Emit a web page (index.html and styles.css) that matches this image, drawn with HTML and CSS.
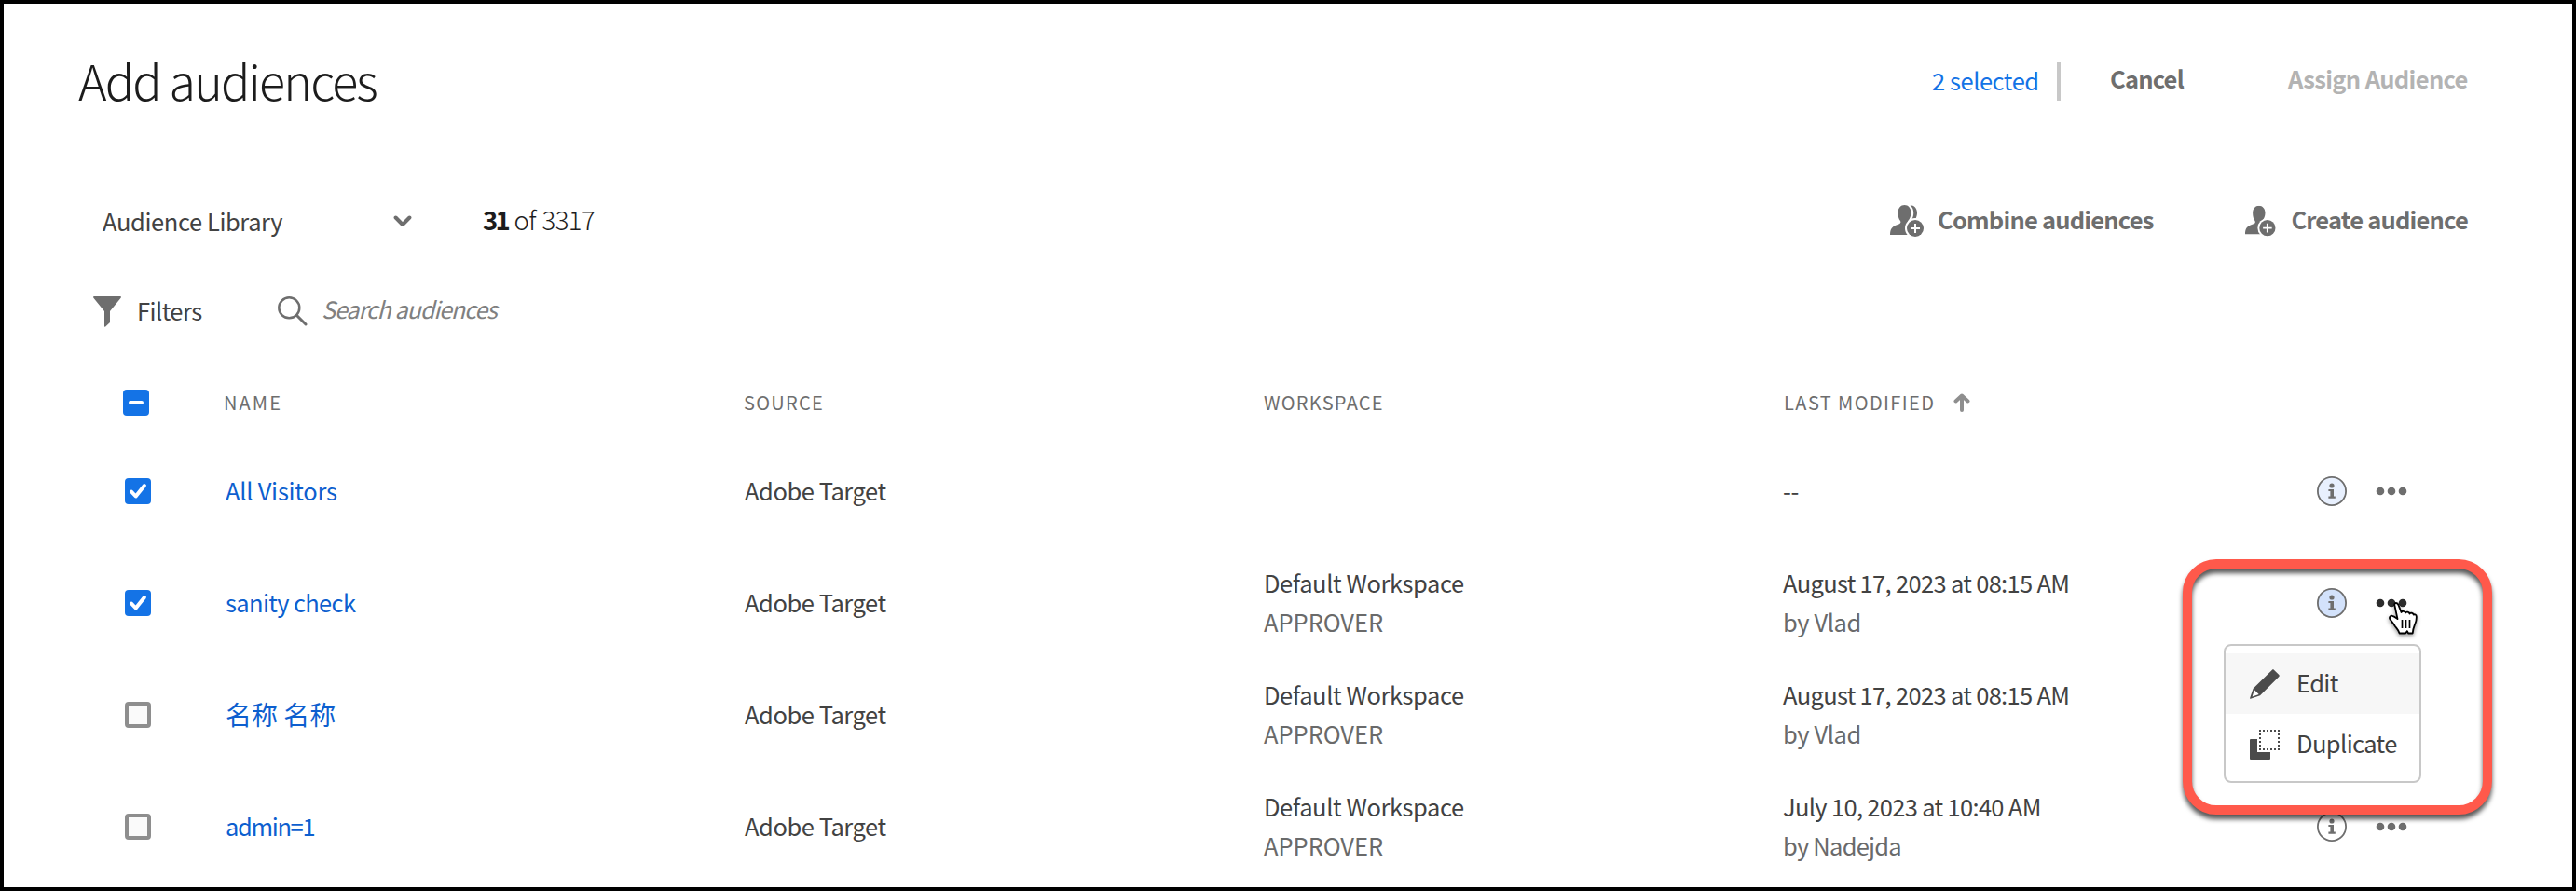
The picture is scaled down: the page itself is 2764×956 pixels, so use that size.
FILE: index.html
```html
<!DOCTYPE html>
<html lang="en">
<head>
<meta charset="utf-8">
<title>Add audiences</title>
<link rel="stylesheet" href="styles.css">
</head>
<body>
<svg class="defs" width="0" height="0">
  <symbol id="info" viewBox="0 0 32 32"><circle cx="16" cy="16" r="15.100" stroke="#6e6e6e" stroke-width="1.800"/><circle cx="16" cy="10" r="2.600" fill="#6e6e6e"/><path d="M12.400 14h5.600v7.600h1.800v2.200h-7.400v-2.200h2V16h-2z" fill="#6e6e6e"/></symbol>
  <symbol id="more" viewBox="0 0 34 10"><circle cx="5" cy="5" r="4.300"/><circle cx="17" cy="5" r="4.300"/><circle cx="29" cy="5" r="4.300"/></symbol>
  <symbol id="check" viewBox="0 0 28 28"><path d="M7 14.500l4.700 5L20.900 8" fill="none" stroke="#fff" stroke-width="4" stroke-linecap="round" stroke-linejoin="round"/></symbol>
  <symbol id="person" viewBox="0 0 36 34"><path d="M15.500 0c4 0 7 3.200 7 8.200 0 4-1.500 6.500-3 8.500-.8 1-.6 2.600.4 3.200l3.100 1.600V32H0c0-6 2-8.500 6-10.200l4-1.600c1.600-.7 1.700-2.300.8-3.500-1.500-2-2.300-4.500-2.300-8.500 0-5 3-8.200 7-8.200z"/></symbol>
</svg>
<main class="dialog">
  <header class="titlebar">
    <h1 class="title">Add audiences</h1>
    <span class="selected">2 selected</span>
    <span class="rule"></span>
    <button class="btn cancel">Cancel</button>
    <button class="btn assign">Assign Audience</button>
  </header>
  <section class="library">
    <div class="picker"><span>Audience Library</span>
      <svg width="20" height="14" viewBox="0 0 20 14"><path d="M2.600 3.500L10 11l7.400-7.500" fill="none" stroke="#6e6e6e" stroke-width="4" stroke-linecap="round" stroke-linejoin="round"/></svg>
    </div>
    <div class="count"><b>31</b> of 3317</div>
    <button class="btn combine">
      <svg width="36" height="34" viewBox="0 0 36 34" fill="#6e6e6e"><path d="M21.500.2C26 .2 29 3.500 29 8.500c0 2.200-.6 4-1.400 6L23.500 15c1.200-2 1.700-4 1.700-6.500 0-3.500-1.200-6.200-3.700-8.300z"/><use href="#person"/><circle cx="27" cy="25" r="11" fill="#fff"/><circle cx="27" cy="25" r="9"/><path d="M27 20v10M22 25h10" stroke="#fff" stroke-width="2"/></svg>
      <span>Combine audiences</span></button>
    <button class="btn create">
      <svg width="36" height="34" viewBox="0 0 36 34" fill="#6e6e6e"><use href="#person"/><circle cx="25" cy="25" r="11" fill="#fff"/><circle cx="25" cy="25" r="9"/><path d="M25 20v10M20 25h10" stroke="#fff" stroke-width="2"/></svg>
      <span>Create audience</span></button>
  </section>
  <section class="filters">
    <svg width="30" height="33" viewBox="0 0 30 33"><path d="M1 0h28c1 0 1.200.9.600 1.700L18 16v12l-4.800 4.500c-.7.500-1.200.2-1.200-.5V16L.4 1.700C-.2.900 0 0 1 0z" fill="#6e6e6e"/></svg>
    <span class="filter-label">Filters</span>
    <svg width="32" height="32" viewBox="0 0 32 32"><circle cx="12.300" cy="12.300" r="11" fill="none" stroke="#6e6e6e" stroke-width="2.500"/><path d="M20.500 20.500l9.500 9.500" stroke="#6e6e6e" stroke-width="3" stroke-linecap="round"/></svg>
    <span class="search">Search audiences</span>
  </section>
  <section class="table">
    <div class="row head">
      <span class="box on"><svg viewBox="0 0 28 28"><path d="M8 14h12" stroke="#fff" stroke-width="4" stroke-linecap="round"/></svg></span>
      <span class="label wide">NAME</span><span class="label">SOURCE</span><span class="label">WORKSPACE</span>
      <span class="sort"><span class="label modified">LAST MODIFIED</span><svg width="18" height="20" viewBox="0 0 18 20"><path d="M9 2.500V18M2.500 8.500L9 2.500l6.500 6" fill="none" stroke="#8e8e8e" stroke-width="4" stroke-linecap="round" stroke-linejoin="round"/></svg></span>
      <span></span>
    </div>
    <div class="row">
      <span class="box on"><svg><use href="#check"/></svg></span>
      <a class="name visitors">All Visitors</a><span class="cell">Adobe Target</span><span></span><span class="cell">--</span>
      <span class="actions"><svg class="info tint1"><use href="#info"/></svg><svg class="more"><use href="#more"/></svg></span>
    </div>
    <div class="row">
      <span class="box on"><svg><use href="#check"/></svg></span>
      <a class="name">sanity check</a><span class="cell">Adobe Target</span>
      <span class="stack"><span>Default Workspace</span><small class="role">APPROVER</small></span>
      <span class="stack"><span class="date">August 17, 2023 at 08:15 AM</span><small>by Vlad</small></span>
      <span class="actions"><svg class="info tint2"><use href="#info"/></svg><svg class="more active"><use href="#more"/></svg></span>
    </div>
    <div class="row">
      <span class="box"></span>
      <a class="name cjk">名称 名称</a><span class="cell">Adobe Target</span>
      <span class="stack"><span>Default Workspace</span><small class="role">APPROVER</small></span>
      <span class="stack"><span class="date">August 17, 2023 at 08:15 AM</span><small>by Vlad</small></span>
      <span class="actions"></span>
    </div>
    <div class="row">
      <span class="box"></span>
      <a class="name admin">admin=1</a><span class="cell">Adobe Target</span>
      <span class="stack"><span>Default Workspace</span><small class="role">APPROVER</small></span>
      <span class="stack"><span class="date">July 10, 2023 at 10:40 AM</span><small class="long">by Nadejda</small></span>
      <span class="actions"><svg class="info"><use href="#info"/></svg><svg class="more"><use href="#more"/></svg></span>
    </div>
  </section>
</main>
<div class="menu">
  <div class="item hover"><svg width="32" height="32" viewBox="0 0 32 32"><path d="M24 .7c.6-.6 1.300-.6 1.900 0l5.400 5.400c.6.600.6 1.200 0 1.800L11 28.300.8 31.700c-.6.200-.9-.1-.7-.7L3.600 20.800z" fill="#4b4b4b"/><path d="M4.900 22.300l4.800 4.800-7.100 2.400z" fill="#fff"/></svg><span>Edit</span></div>
  <div class="item"><svg width="32" height="32" viewBox="0 0 32 32"><path d="M1 10h7v14h14v7a1 1 0 0 1-1 1H1a1 1 0 0 1-1-1V11a1 1 0 0 1 1-1z" fill="#4b4b4b"/><path d="M10 1h22M10 21h22M11 4v16M31 4v16" stroke="#4b4b4b" stroke-width="2" stroke-dasharray="2 2"/></svg><span>Duplicate</span></div>
</div>
<div class="callout"></div>
<svg class="pointer" width="32" height="36" viewBox="0 0 32 36"><path d="M7.500 4c-.7-2.200.3-3 1.500-3s2 .7 2.600 2.400L14.500 11c.3-1.800 4-1.600 4.500.6.700-1.600 4-1.200 4.500.9.900-1.400 3.800-1 4.400 1.200.8-.9 2.800-.2 2.900 1.800.2 3.200-.2 5-1.500 8-1.200 3-2.100 4.500-2.600 10h-4.600l-1.200-2.400-1.800 2.400h-6.500c-.6-3-2.800-5-5-8-1.600-2.800-3-4.300-5-6.800-1.500-2 0-4.700 2.500-3.900 1.600.4 3.400 1.700 5.400 3.300z" fill="#fff" stroke="#000" stroke-width="1.800" stroke-linejoin="round"/><path d="M15.500 19v9M19.500 19v9M23.500 19v9" stroke="#000" stroke-width="1.700"/></svg>
</body>
</html>
```
FILE: styles.css
```css
*{box-sizing:border-box}
body{margin:0;font-family:"Noto Sans CJK SC",sans-serif;font-size:25.5px;color:#424242;background:#fff;line-height:1;white-space:nowrap}
.defs{position:absolute}
.dialog{height:956px;border:4px solid #000;display:flex;flex-direction:column;overflow:hidden}
.titlebar,.library,.filters{display:flex;align-items:center}
.titlebar{height:160px;padding:0 112px 0 80px}
.title{margin:0 auto 0 0;padding-top:3px;font-weight:300;font-size:52px;letter-spacing:-1.850px;color:#1c1c1c}
.selected{width:134px;padding-top:4px;color:#1473e6;letter-spacing:-.45px}
.rule{width:4px;height:42px;background:#c8c8c8;margin:6px 53px 0 0}
.btn{border:0;background:none;padding:0;font:700 25.5px/1 "Noto Sans CJK SC",sans-serif;letter-spacing:-.8px;color:#6e6e6e;display:flex;align-items:center}
.cancel{width:191px}
.assign{width:193px;color:#b3b3b3;letter-spacing:-.65px}
.library{height:146px;padding:0 112px 0 106px}
.picker{display:flex;align-items:center;justify-content:space-between;width:332px;letter-spacing:-.4px}
.count{margin:0 auto 0 76px;padding-bottom:2px;font-size:27.5px;font-weight:300;letter-spacing:-.6px;word-spacing:1.200px;color:#1c1c1c}
.count b{font-weight:700;letter-spacing:-2.800px}
.combine{width:381px}
.create{width:239px}
.btn svg{margin-right:15px}
.btn span{padding-bottom:4px}
.filters{height:48px;padding-left:96px}
.filter-label{width:151px;margin-left:17px;padding-bottom:3px;letter-spacing:-.55px}
.search{margin-left:15px;padding-bottom:6px;font-size:25px;font-style:italic;letter-spacing:-1px;color:#808080}
.table{margin-top:39px}
.row{display:grid;grid-template-columns:108px 557px 557px 557px 573px 1fr;align-items:center;height:120px;padding-left:130px}
.head{grid-template-columns:108px 558px 558px 558px 571px 1fr;height:70px;padding-left:128px;font-size:20px;color:#6e6e6e}
.label{padding-bottom:1px;letter-spacing:1.250px}
.wide{letter-spacing:2.100px}
.modified{letter-spacing:1.400px}
.box{width:28px;height:28px;border:4px solid #8e8e8e;border-radius:4px;background:#fafafa}
.box.on{background:#1473e6;border:0}
.box svg{width:28px;height:28px;display:block}
.name{padding-bottom:2px;color:#0d5fcf;letter-spacing:-.65px}
.visitors{letter-spacing:-.25px}
.admin{letter-spacing:-1.350px}
.cjk{font-size:28px;letter-spacing:0}
.cell{padding-bottom:2px;letter-spacing:-.45px}
.sort{display:flex;align-items:center;gap:20px}
.stack{display:flex;flex-direction:column;gap:16.5px;padding-bottom:3px;letter-spacing:-.42px}
.stack small{font-size:25.5px;letter-spacing:-.4px;color:#6a6a6a}
.stack .role{letter-spacing:-.05px}
.stack .long{letter-spacing:-.76px}
.date{letter-spacing:-.68px}
.actions{display:flex;align-items:center;gap:31px}
.info{width:32px;height:32px;fill:none}
.tint1{fill:#e8f0fe}
.tint2{fill:#d3e2fb}
.more{width:34px;height:10px;fill:#6e6e6e}
.more.active{fill:#2c2c2c}
.menu{position:absolute;left:2386px;top:691px;width:212px;height:149px;border:2px solid #c8c8c8;border-radius:8px;background:#fff;padding-top:8px;letter-spacing:-.6px}
.item{height:65px;display:flex;align-items:center;padding-left:26px;gap:18px}
.item span{padding-bottom:4px}
.hover{background:#f7f7f7}
.callout{position:absolute;left:2342px;top:600px;width:332px;height:274px;border:10px solid #ff594b;border-radius:36px;filter:drop-shadow(0 5px 2.5px rgba(0,0,0,.65))}
.pointer{position:absolute;left:2562px;top:646px;filter:drop-shadow(0 2px 2px rgba(0,0,0,.4))}
```
